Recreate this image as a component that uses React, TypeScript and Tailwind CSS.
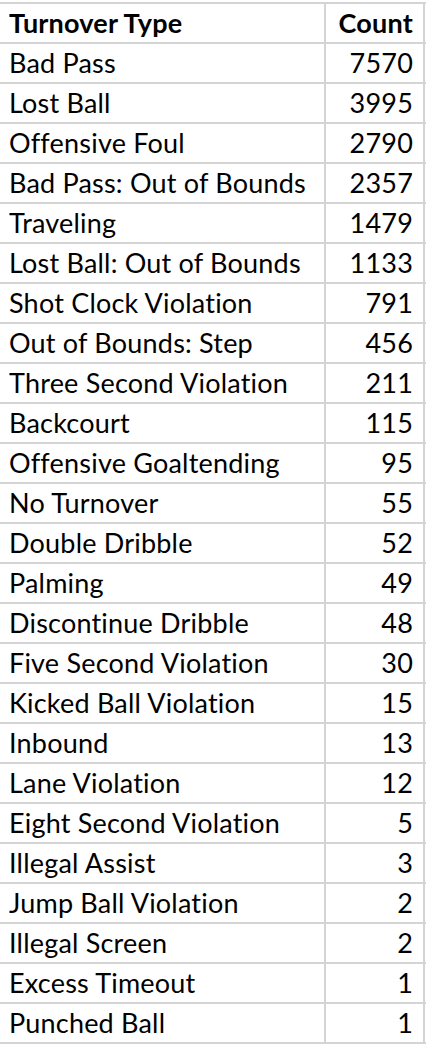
const rows: [string, number][] = [
  ["Bad Pass", 7570],
  ["Lost Ball", 3995],
  ["Offensive Foul", 2790],
  ["Bad Pass: Out of Bounds", 2357],
  ["Traveling", 1479],
  ["Lost Ball: Out of Bounds", 1133],
  ["Shot Clock Violation", 791],
  ["Out of Bounds: Step", 456],
  ["Three Second Violation", 211],
  ["Backcourt", 115],
  ["Offensive Goaltending", 95],
  ["No Turnover", 55],
  ["Double Dribble", 52],
  ["Palming", 49],
  ["Discontinue Dribble", 48],
  ["Five Second Violation", 30],
  ["Kicked Ball Violation", 15],
  ["Inbound", 13],
  ["Lane Violation", 12],
  ["Eight Second Violation", 5],
  ["Illegal Assist", 3],
  ["Jump Ball Violation", 2],
  ["Illegal Screen", 2],
  ["Excess Timeout", 1],
  ["Punched Ball", 1],
]

export default function App() {
  return (
    <div className="w-[426px] h-[1046px] bg-white pt-[2px] overflow-hidden font-['Lato',sans-serif] text-black text-[27px] tracking-[0.2px] [font-variant-ligatures:none]">
      <div className="border-t-2 border-[#d4d4d4]">
        <Row name="Turnover Type" count="Count" bold />
        {rows.map(([name, count]) => (
          <Row key={name} name={name} count={String(count)} />
        ))}
      </div>
    </div>
  )
}

// 한 줄 (이름 + 개수)
function Row({ name, count, bold }: { name: string; count: string; bold?: boolean }) {
  return (
    <div className={`flex h-10 border-b-2 border-[#d4d4d4] leading-[38px] ${bold ? "font-bold" : ""}`}>
      <div className="w-[326px] border-r-2 border-[#d4d4d4] pl-[9px] whitespace-nowrap">{name}</div>
      <div className="w-[99px] border-r-2 border-[#d4d4d4] pr-[10px] text-right">{count}</div>
    </div>
  )
}
